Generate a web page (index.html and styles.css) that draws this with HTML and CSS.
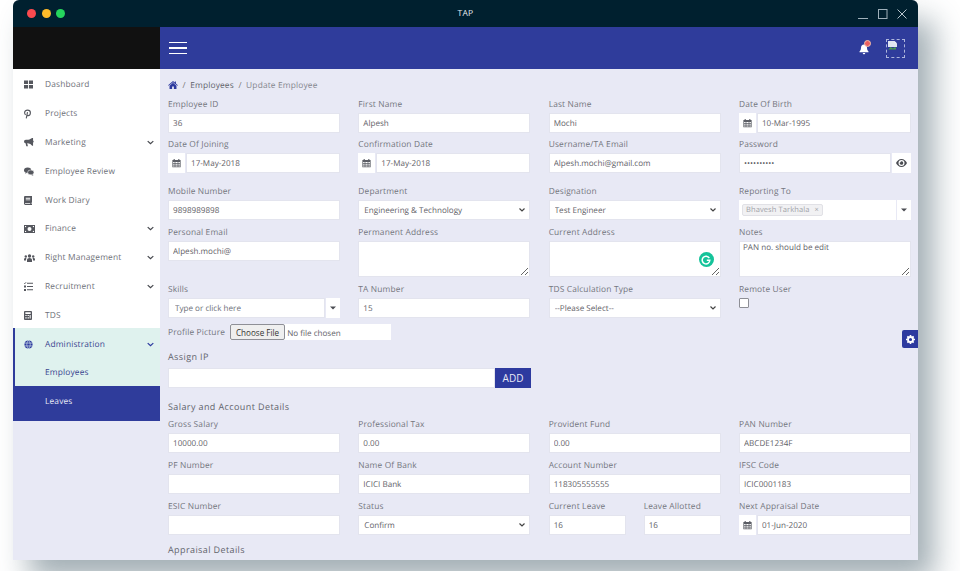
FILE: index.html
```html
<!DOCTYPE html>
<html lang="en">
<head>
<meta charset="utf-8">
<title>TAP</title>
<link rel="stylesheet" href="styles.css">
</head>
<body>
<svg class="defs" width="0" height="0" aria-hidden="true">
  <symbol id="cal" viewBox="0 0 12 12"><path fill="currentColor" d="M2 1h2v1h4V1h2v1h1.500v9.500H.5V2H2zM1.500 4.500v1.500h2V4.500zm3 0v1.500h3V4.500zm4 0v1.500h2V4.500zM1.500 7v1.300h2V7zm3 0v1.300h3V7zm4 0v1.300h2V7zM1.500 9.200v1.300h2V9.200zm3 0v1.300h3V9.200zm4 0v1.300h2V9.200z"/></symbol>
  <symbol id="chev" viewBox="0 0 10 6"><path fill="none" stroke="currentColor" stroke-width="1.800" d="M1 1l4 3.600L9 1"/></symbol>
  <symbol id="caret" viewBox="0 0 6 4"><path fill="currentColor" d="M0 .5h6L3 3.500z"/></symbol>
</svg>
<div class="window">
  <div class="titlebar">
    <div class="lights"><i class="light red"></i><i class="light yellow"></i><i class="light green"></i></div>
    <div class="title">TAP</div>
    <div class="winctl">
      <svg width="10" height="10" viewBox="0 0 10 10"><path d="M0 9.500h10" stroke="#9fb0ba" fill="none"/></svg>
      <svg width="10" height="10" viewBox="0 0 10 10"><rect x=".5" y=".5" width="8.500" height="9" stroke="#9fb0ba" fill="none"/></svg>
      <svg width="10" height="10" viewBox="0 0 10 10"><path d="M.5.500l9 9M9.500.500l-9 9" stroke="#b7c4cc" fill="none"/></svg>
    </div>
  </div>
  <div class="topbar">
    <div class="logo"></div>
    <div class="navbar">
      <div class="burger"><i></i><i></i><i></i></div>
      <div class="nav-right">
        <span class="bell">
          <svg width="10" height="12" viewBox="0 0 10 12"><path fill="#fff" d="M5 1.500c2 0 3 1.500 3 3.300 0 2.200 1 3 1.500 3.700v.8h-9v-.8C1 7.800 2 7 2 4.800c0-1.800 1-3.300 3-3.300zM3.800 10h2.400c0 .8-.5 1.300-1.200 1.300S3.800 10.800 3.800 10z"/></svg>
          <b class="badge"></b>
        </span>
        <span class="avatar">
          <svg width="10" height="10" viewBox="0 0 10 10"><path fill="#dfe6f2" d="M0 0h6.500L9 2.500V6H0z"/><path fill="#4a9b4f" d="M0 9l2.500-3L5 7.500 7 6l1 1v1.500H0z"/><path fill="#eef1f7" d="M6.500 0L9 2.500H6.500z"/></svg>
        </span>
      </div>
    </div>
  </div>
  <div class="body">
    <nav class="sidebar">
      <a class="item"><span class="ico"><svg width="9" height="9" viewBox="0 0 10 10"><path fill="currentColor" d="M0 .5h4.500v4H0zM5.500.5H10v4H5.500zM0 5.500h4.500v4H0zM5.500 5.500H10v4H5.500z"/></svg></span>Dashboard</a>
      <a class="item"><span class="ico"><svg width="7" height="10" viewBox="0 0 8 11"><path fill="none" stroke="currentColor" stroke-width="1.300" d="M2 6.500C.8 5.800.7 4.800.7 4 .7 2.200 2.300 1 4 1s3.300 1.100 3.300 3c0 1.800-1 3.300-2.500 3.300-.8 0-1.300-.5-1.500-1M4 3.300 2.600 10.500"/></svg></span>Projects</a>
      <a class="item"><span class="ico"><svg width="10" height="9" viewBox="0 0 11 10"><path fill="currentColor" d="M9 0h1v8.500H9L7 6.800C5.800 6 4.500 5.800 3.500 5.800l.8 3.400H2.500L1.700 5.800C.7 5.700 0 5 0 3.900 0 2.800.8 2 2 2h1.500C5 2 6.800 1.500 9 0zM10.300 2.800c.5.300.7.700.7 1.200s-.2.900-.7 1.200z"/></svg></span>Marketing<svg class="chev"><use href="#chev"/></svg></a>
      <a class="item"><span class="ico"><svg width="10" height="9" viewBox="0 0 11 10"><ellipse cx="4" cy="3.500" rx="4" ry="3" fill="currentColor"/><ellipse cx="7.500" cy="6" rx="3.500" ry="2.700" fill="currentColor" stroke="#fff" stroke-width=".6"/><path fill="currentColor" d="M9 8l1.500 1.800L8 8.800zM2 6l-1 1.500L3.500 6.500z"/></svg></span>Employee Review</a>
      <a class="item"><span class="ico"><svg width="8" height="9" viewBox="0 0 9 10"><path fill="currentColor" d="M1.500 0H9v7.500H8v1h1V10H1.500C.6 10 0 9.400 0 8.500v-7C0 .6.600 0 1.500 0zM2 2v1h5V2zM2 4v.8h5V4zM1.500 8c-.6 0-.6 1 0 1H7V8z"/></svg></span>Work Diary</a>
      <a class="item"><span class="ico"><svg width="11" height="8" viewBox="0 0 11 8"><path fill="currentColor" fill-rule="evenodd" d="M0 0h11v8H0zM5.500 2a2 2 0 1 0 0 4 2 2 0 0 0 0-4zM1 1v1.300A1.300 1.300 0 0 0 2.300 1zM8.700 1A1.300 1.300 0 0 0 10 2.300V1zM1 5.700V7h1.300A1.300 1.300 0 0 0 1 5.700zM10 5.700A1.300 1.300 0 0 0 8.700 7H10z"/></svg></span>Finance<svg class="chev"><use href="#chev"/></svg></a>
      <a class="item"><span class="ico"><svg width="11" height="8" viewBox="0 0 11 8"><circle cx="5.500" cy="2" r="1.700" fill="currentColor"/><circle cx="1.800" cy="2.500" r="1.200" fill="currentColor"/><circle cx="9.200" cy="2.500" r="1.200" fill="currentColor"/><path fill="currentColor" d="M3 8V6c0-1.300 1-2 2.500-2S8 4.700 8 6v2zM0 6.500V5.300C0 4.500.7 4 1.800 4l.7.200C2.200 4.600 2 5.200 2 6v.5zM11 6.500V5.300C11 4.500 10.300 4 9.200 4l-.7.200c.3.400.5 1 .5 1.800v.5z"/></svg></span>Right Management<svg class="chev"><use href="#chev"/></svg></a>
      <a class="item"><span class="ico"><svg width="9" height="9" viewBox="0 0 9 9"><path fill="currentColor" d="M3 .8h6v1H3zM3 4h6v1H3zM3 7.200h6v1H3zM0 3.500h2v2H0zM0 7h2v2H0z"/><path fill="none" stroke="currentColor" d="M.2 1l.6.700L2 .3"/></svg></span>Recruitment<svg class="chev"><use href="#chev"/></svg></a>
      <a class="item"><span class="ico"><svg width="8" height="9" viewBox="0 0 9 10"><path fill="currentColor" fill-rule="evenodd" d="M1 0h7c.6 0 1 .4 1 1v8c0 .6-.4 1-1 1H1c-.6 0-1-.4-1-1V1c0-.6.400-1 1-1zM1.500 1.300v2h6v-2zM1.500 4.500v1.200h1.500V4.500zm2.500 0v1.200h1.500V4.500zm2.300 0V8.500h1.200V4.500zM1.500 7v1.500h1.500V7zM4 7v1.500h1.500V7z"/></svg></span>TDS</a>
      <a class="item active-parent"><span class="ico"><svg width="9" height="9" viewBox="0 0 10 10"><circle cx="5" cy="5" r="4.500" fill="currentColor"/><path fill="none" stroke="#dff2ee" stroke-width=".7" d="M.5 3.400h9M.5 6.600h9M5 .5C2.500 3 2.500 7 5 9.500M5 .5C7.500 3 7.500 7 5 9.500"/></svg></span>Administration<svg class="chev"><use href="#chev"/></svg></a>
      <a class="sub sub-on">Employees</a>
      <a class="sub sub-dark">Leaves</a>
    </nav>
    <main class="main">
      <div class="crumb">
        <svg width="10" height="8" viewBox="0 0 11 9"><path fill="#2d3a9f" d="M5.500 0l2 1.700V.6h1.300v2.200L11 4.700l-.6.600-4.900-4-4.900 4L0 4.700zM1.600 5.300l3.900-3.200 3.900 3.200V9H6.500V6.300h-2V9H1.600z"/></svg>
        <span class="sep">/</span><span class="crumb-link">Employees</span><span class="sep">/</span><span>Update Employee</span>
      </div>

      <div class="row row-first">
        <div class="field"><label>Employee ID</label><input value="36"></div>
        <div class="field"><label>First Name</label><input value="Alpesh"></div>
        <div class="field"><label>Last Name</label><input value="Mochi"></div>
        <div class="field"><label>Date Of Birth</label><div class="group"><span class="addon"><svg width="9" height="10"><use href="#cal"/></svg></span><input value="10-Mar-1995"></div></div>
      </div>

      <div class="row row-wide">
        <div class="field"><label>Date Of Joining</label><div class="group"><span class="addon"><svg width="9" height="10"><use href="#cal"/></svg></span><input value="17-May-2018"></div></div>
        <div class="field"><label>Confirmation Date</label><div class="group"><span class="addon"><svg width="9" height="10"><use href="#cal"/></svg></span><input value="17-May-2018"></div></div>
        <div class="field"><label>Username/TA Email</label><input value="Alpesh.mochi@gmail.com"></div>
        <div class="field"><label>Password</label><div class="group"><input type="password" value="123456789x"><span class="addon addon-right"><svg width="11" height="8" viewBox="0 0 11 8"><path fill="currentColor" fill-rule="evenodd" d="M5.500 0C8 0 10 1.700 11 4 10 6.300 8 8 5.500 8S1 6.300 0 4C1 1.700 3 0 5.500 0zm0 1a3 3 0 1 0 0 6 3 3 0 0 0 0-6zm0 1.200a1.800 1.800 0 1 1-1.700 1.200c.5.300 1.400-.4 1-1.100z"/></svg></span></div></div>
      </div>

      <div class="row">
        <div class="field"><label>Mobile Number</label><input value="9898989898"></div>
        <div class="field"><label>Department</label><select><option>Engineering &amp; Technology</option></select></div>
        <div class="field"><label>Designation</label><select><option>Test Engineer</option></select></div>
        <div class="field"><label>Reporting To</label><div class="group"><div class="tagbox"><span class="tag">Bhavesh Tarkhala <span class="tag-x">×</span></span></div><span class="addon addon-caret"><svg width="6" height="4"><use href="#caret"/></svg></span></div></div>
      </div>

      <div class="row">
        <div class="field"><label>Personal Email</label><input value="Alpesh.mochi@"></div>
        <div class="field"><label>Permanent Address</label><textarea></textarea></div>
        <div class="field grammarly-host"><label>Current Address</label><textarea></textarea>
          <span class="grammarly"><svg width="10" height="10" viewBox="0 0 10 10"><path fill="none" stroke="#fff" stroke-width="1.500" d="M8.300 3.200A3.800 3.800 0 1 0 8.800 5.300H5.800"/></svg></span>
        </div>
        <div class="field"><label>Notes</label><textarea>PAN no. should be edit</textarea></div>
      </div>

      <div class="row row-file">
        <div class="field"><label>Skills</label><div class="group"><input class="skills" placeholder="Type or click here"><span class="addon addon-caret"><svg width="6" height="4"><use href="#caret"/></svg></span></div></div>
        <div class="field"><label>TA Number</label><input value="15"></div>
        <div class="field"><label>TDS Calculation Type</label><select><option>--Please Select--</option></select></div>
        <div class="field"><label>Remote User</label><input class="check" type="checkbox"></div>
      </div>

      <div class="file-row"><label>Profile Picture</label><input type="file"></div>

      <h3 class="head head-ip">Assign IP</h3>
      <div class="ip-row"><input><button type="button">ADD</button></div>

      <h3 class="head head-salary">Salary and Account Details</h3>
      <div class="row">
        <div class="field"><label>Gross Salary</label><input value="10000.00"></div>
        <div class="field"><label>Professional Tax</label><input value="0.00"></div>
        <div class="field"><label>Provident Fund</label><input value="0.00"></div>
        <div class="field"><label>PAN Number</label><input value="ABCDE1234F"></div>
      </div>
      <div class="row">
        <div class="field"><label>PF Number</label><input></div>
        <div class="field"><label>Name Of Bank</label><input value="ICICI Bank"></div>
        <div class="field"><label>Account Number</label><input value="118305555555"></div>
        <div class="field"><label>IFSC Code</label><input value="ICIC0001183"></div>
      </div>
      <div class="row row-last">
        <div class="field"><label>ESIC Number</label><input></div>
        <div class="field"><label>Status</label><select><option>Confirm</option></select></div>
        <div class="split">
          <div class="field"><label>Current Leave</label><input value="16"></div>
          <div class="field"><label>Leave Allotted</label><input value="16"></div>
        </div>
        <div class="field"><label>Next Appraisal Date</label><div class="group"><span class="addon"><svg width="9" height="10"><use href="#cal"/></svg></span><input value="01-Jun-2020"></div></div>
      </div>
      <h3 class="head">Appraisal Details</h3>
    </main>
    <span class="gear"><svg width="9" height="9" viewBox="0 0 10 10"><circle cx="5" cy="5" r="2.800" fill="none" stroke="#fff" stroke-width="2"/><path stroke="#fff" stroke-width="1.800" d="M5 0v2M5 8v2M0 5h2M8 5h2M1.500 1.500l1.400 1.400M7.100 7.100l1.400 1.400M1.500 8.500l1.400-1.400M7.100 2.900l1.400-1.400"/></svg></span>
  </div>
</div>
</body>
</html>
```
FILE: styles.css
```css
* { box-sizing: border-box; }
html, body { margin: 0; height: 571px; overflow: hidden; background: #fff; }
body { font-family: "Open Sans", "Liberation Sans", sans-serif; font-size: 8.400px; color: #6d6f78; text-rendering: geometricPrecision; }
.defs { position: absolute; }
.window { width: 905px; height: 560px; margin-left: 13px; border-radius: 6px 6px 0 0; display: flex; flex-direction: column; box-shadow: 16px 20px 30px rgba(62, 88, 100, .48); background: #e8e9f5; }

.titlebar { height: 27px; flex: none; background: #00202f; border-radius: 6px 6px 0 0; display: flex; align-items: center; position: relative; }
.lights { display: flex; gap: 5.500px; padding-left: 14px; }
.light { width: 9px; height: 9px; border-radius: 50%; display: block; }
.red { background: #fb4a4f; }
.yellow { background: #fdbb2a; }
.green { background: #25d55d; }
.title { position: absolute; left: 0; right: 0; text-align: center; color: #e6edf1; font-size: 8.500px; letter-spacing: .3px; }
.winctl { margin-left: auto; display: flex; gap: 9.500px; padding-right: 11px; }
.winctl svg { display: block; }

.topbar { height: 42px; flex: none; display: flex; }
.logo { width: 147px; background: #111; }
.navbar { flex: 1; background: #2f3c9b; display: flex; align-items: center; justify-content: space-between; padding: 0 13px 0 9px; }
.burger { width: 18px; display: flex; flex-direction: column; gap: 4px; }
.burger i { display: block; height: 1.500px; background: #fff; }
.nav-right { display: flex; align-items: center; gap: 17px; }
.bell { position: relative; display: block; height: 12px; margin-top: 2px; }
.bell svg { display: block; }
.badge { position: absolute; top: -3px; right: -2px; width: 7px; height: 7px; border-radius: 50%; background: #ec5f5f; border: 1.500px solid #f3c1ae; }
.avatar { width: 19px; height: 19px; border: 1px dashed #aeb6dc; display: flex; padding: 1px 0 0 1px; }
.avatar svg { display: block; }

.body { flex: 1; min-height: 0; display: flex; position: relative; }
.sidebar { width: 147px; flex: none; display: flex; flex-direction: column; align-self: flex-start; background: #fff; }
.item { height: 28.800px; display: flex; align-items: center; color: #70727a; letter-spacing: .15px; padding: 3px 0 0 11px; position: relative; }
.ico { width: 21px; flex: none; display: flex; align-items: center; color: #55575e; }
.ico svg { display: block; }
.chev { width: 7px; height: 5px; margin-left: auto; margin-right: 6px; color: #44464c; }
.active-parent { background: #dff2ee; border-left: 2px solid #2f3c9b; padding-left: 9px; color: #3a4690; }
.active-parent .ico, .active-parent .chev { color: #2d3a9f; }
.sub { display: flex; align-items: center; padding-left: 32px; letter-spacing: .15px; }
.sub-on { height: 29px; padding-top: 3px; background: #dff2ee; color: #3a4690; border-left: 2px solid #2f3c9b; padding-left: 30px; }
.sub-dark { height: 35px; background: #2f3c9b; color: #e8e9f5; padding-bottom: 3px; }

.main { flex: 1; min-width: 0; padding: 9px 7px 0 8px; overflow: hidden; background: #e8e9f5; }
.crumb { height: 14px; display: flex; align-items: center; gap: 4.500px; color: #85878f; letter-spacing: .15px; margin-bottom: 4px; }
.crumb-link { color: #62646c; }
.sep { color: #777; }
.row { display: grid; grid-template-columns: repeat(4, 172px); column-gap: 18.330px; margin-bottom: 4px; }
.row-first { margin-bottom: 3px; }
.row-wide { margin-bottom: 10px; }
.row-file { margin-bottom: 6px; }
.row-last { margin-bottom: 8px; }
.field { min-width: 0; position: relative; }
.field label, .file-row label { display: block; height: 15px; line-height: 17px; margin-bottom: 2px; letter-spacing: .15px; color: #75777f; }
.file-row label { line-height: 15px; }
input, select, textarea { font-family: "Open Sans", "Liberation Sans", sans-serif; font-size: 8.100px; color: #5f6168; text-rendering: geometricPrecision; }
.field input, .field select, .ip-row input { display: block; width: 100%; height: 20px; border: 1px solid #e3e4ee; background: #fff; padding: 0 4px; border-radius: 0; outline: 0; }
.field select { padding: 0 14px 0 5px; appearance: none; background: #fff url("data:image/svg+xml,%3Csvg xmlns='http://www.w3.org/2000/svg' width='6' height='4' viewBox='0 0 6 4'%3E%3Cpath fill='none' stroke='%23444' stroke-width='1.200' d='M.5.500l2.500 2.500L5.500.500'/%3E%3C/svg%3E") no-repeat right 4px center; }
.field textarea { display: block; width: 100%; height: 36px; border: 1px solid #e3e4ee; background: #fff; padding: 0 3px; margin: 0; border-radius: 0; outline: 0; }
.field input::placeholder { color: #6d6f78; opacity: 1; }
.group { display: flex; height: 20px; gap: 1px; }
.group input { flex: 1; min-width: 0; }
.addon { flex: none; width: 17px; background: #fff; display: flex; align-items: center; justify-content: center; color: #5c5e65; }
.addon svg { display: block; }
.addon-right { width: 19px; color: #4a4c52; }
.addon-caret { width: 14px; color: #4a4c52; }
.tagbox { flex: 1; background: #fff; display: flex; align-items: center; padding-left: 3px; }
.tag { height: 12px; line-height: 10px; padding: 0 3px; border: 1px solid #e1e1e6; background: #f1f1f3; border-radius: 2px; color: #a0a1a8; font-size: 7.500px; letter-spacing: .1px; }
.tag-x { margin-left: 3px; }
.skills { padding-left: 6px !important; }
.field .check { width: 10px; height: 10px; margin: 1px 0 0; appearance: none; border: 1px solid #8e8f96; border-radius: 1px; background: #fff; padding: 0; }
.grammarly { position: absolute; right: 7px; top: 28px; width: 15px; height: 15px; border-radius: 50%; background: #15c39a; display: flex; align-items: center; justify-content: center; }
.grammarly svg { display: block; }

.file-row { display: flex; align-items: center; gap: 4px; height: 16px; }
.file-row label { margin: 0; width: 58px; flex: none; }
.file-row input { width: 161px; height: 16px; background: #fff; }
.file-row input::file-selector-button { font-family: "Open Sans", "Liberation Sans", sans-serif; font-size: 8.100px; height: 16px; padding: 0 5px; margin-right: 2px; border: 1px solid #8e8f96; border-radius: 2px; background: #efefef; color: #333; }
.head { font-size: 9px; font-weight: 400; line-height: 14px; height: 14px; margin: 0; letter-spacing: .4px; color: #63656d; }
.head-ip { margin-top: 10px; margin-bottom: 4px; }
.ip-row { display: flex; height: 20px; width: 363px; }
.ip-row input { flex: 1; min-width: 0; width: auto; }
.ip-row button { width: 36px; height: 20px; border: 0; padding: 0; background: #2d3a9f; color: #e8e9f5; font-family: "Open Sans", "Liberation Sans", sans-serif; font-size: 10px; }
.head-salary { margin-top: 12px; margin-bottom: 2px; }
.split { display: grid; grid-template-columns: 77px 77px; column-gap: 18px; }
.gear { position: absolute; right: 0; top: 261px; width: 16px; height: 18px; background: #2d3a9f; display: flex; align-items: center; justify-content: center; border-radius: 2px 0 0 2px; }
.gear svg { display: block; }
```
